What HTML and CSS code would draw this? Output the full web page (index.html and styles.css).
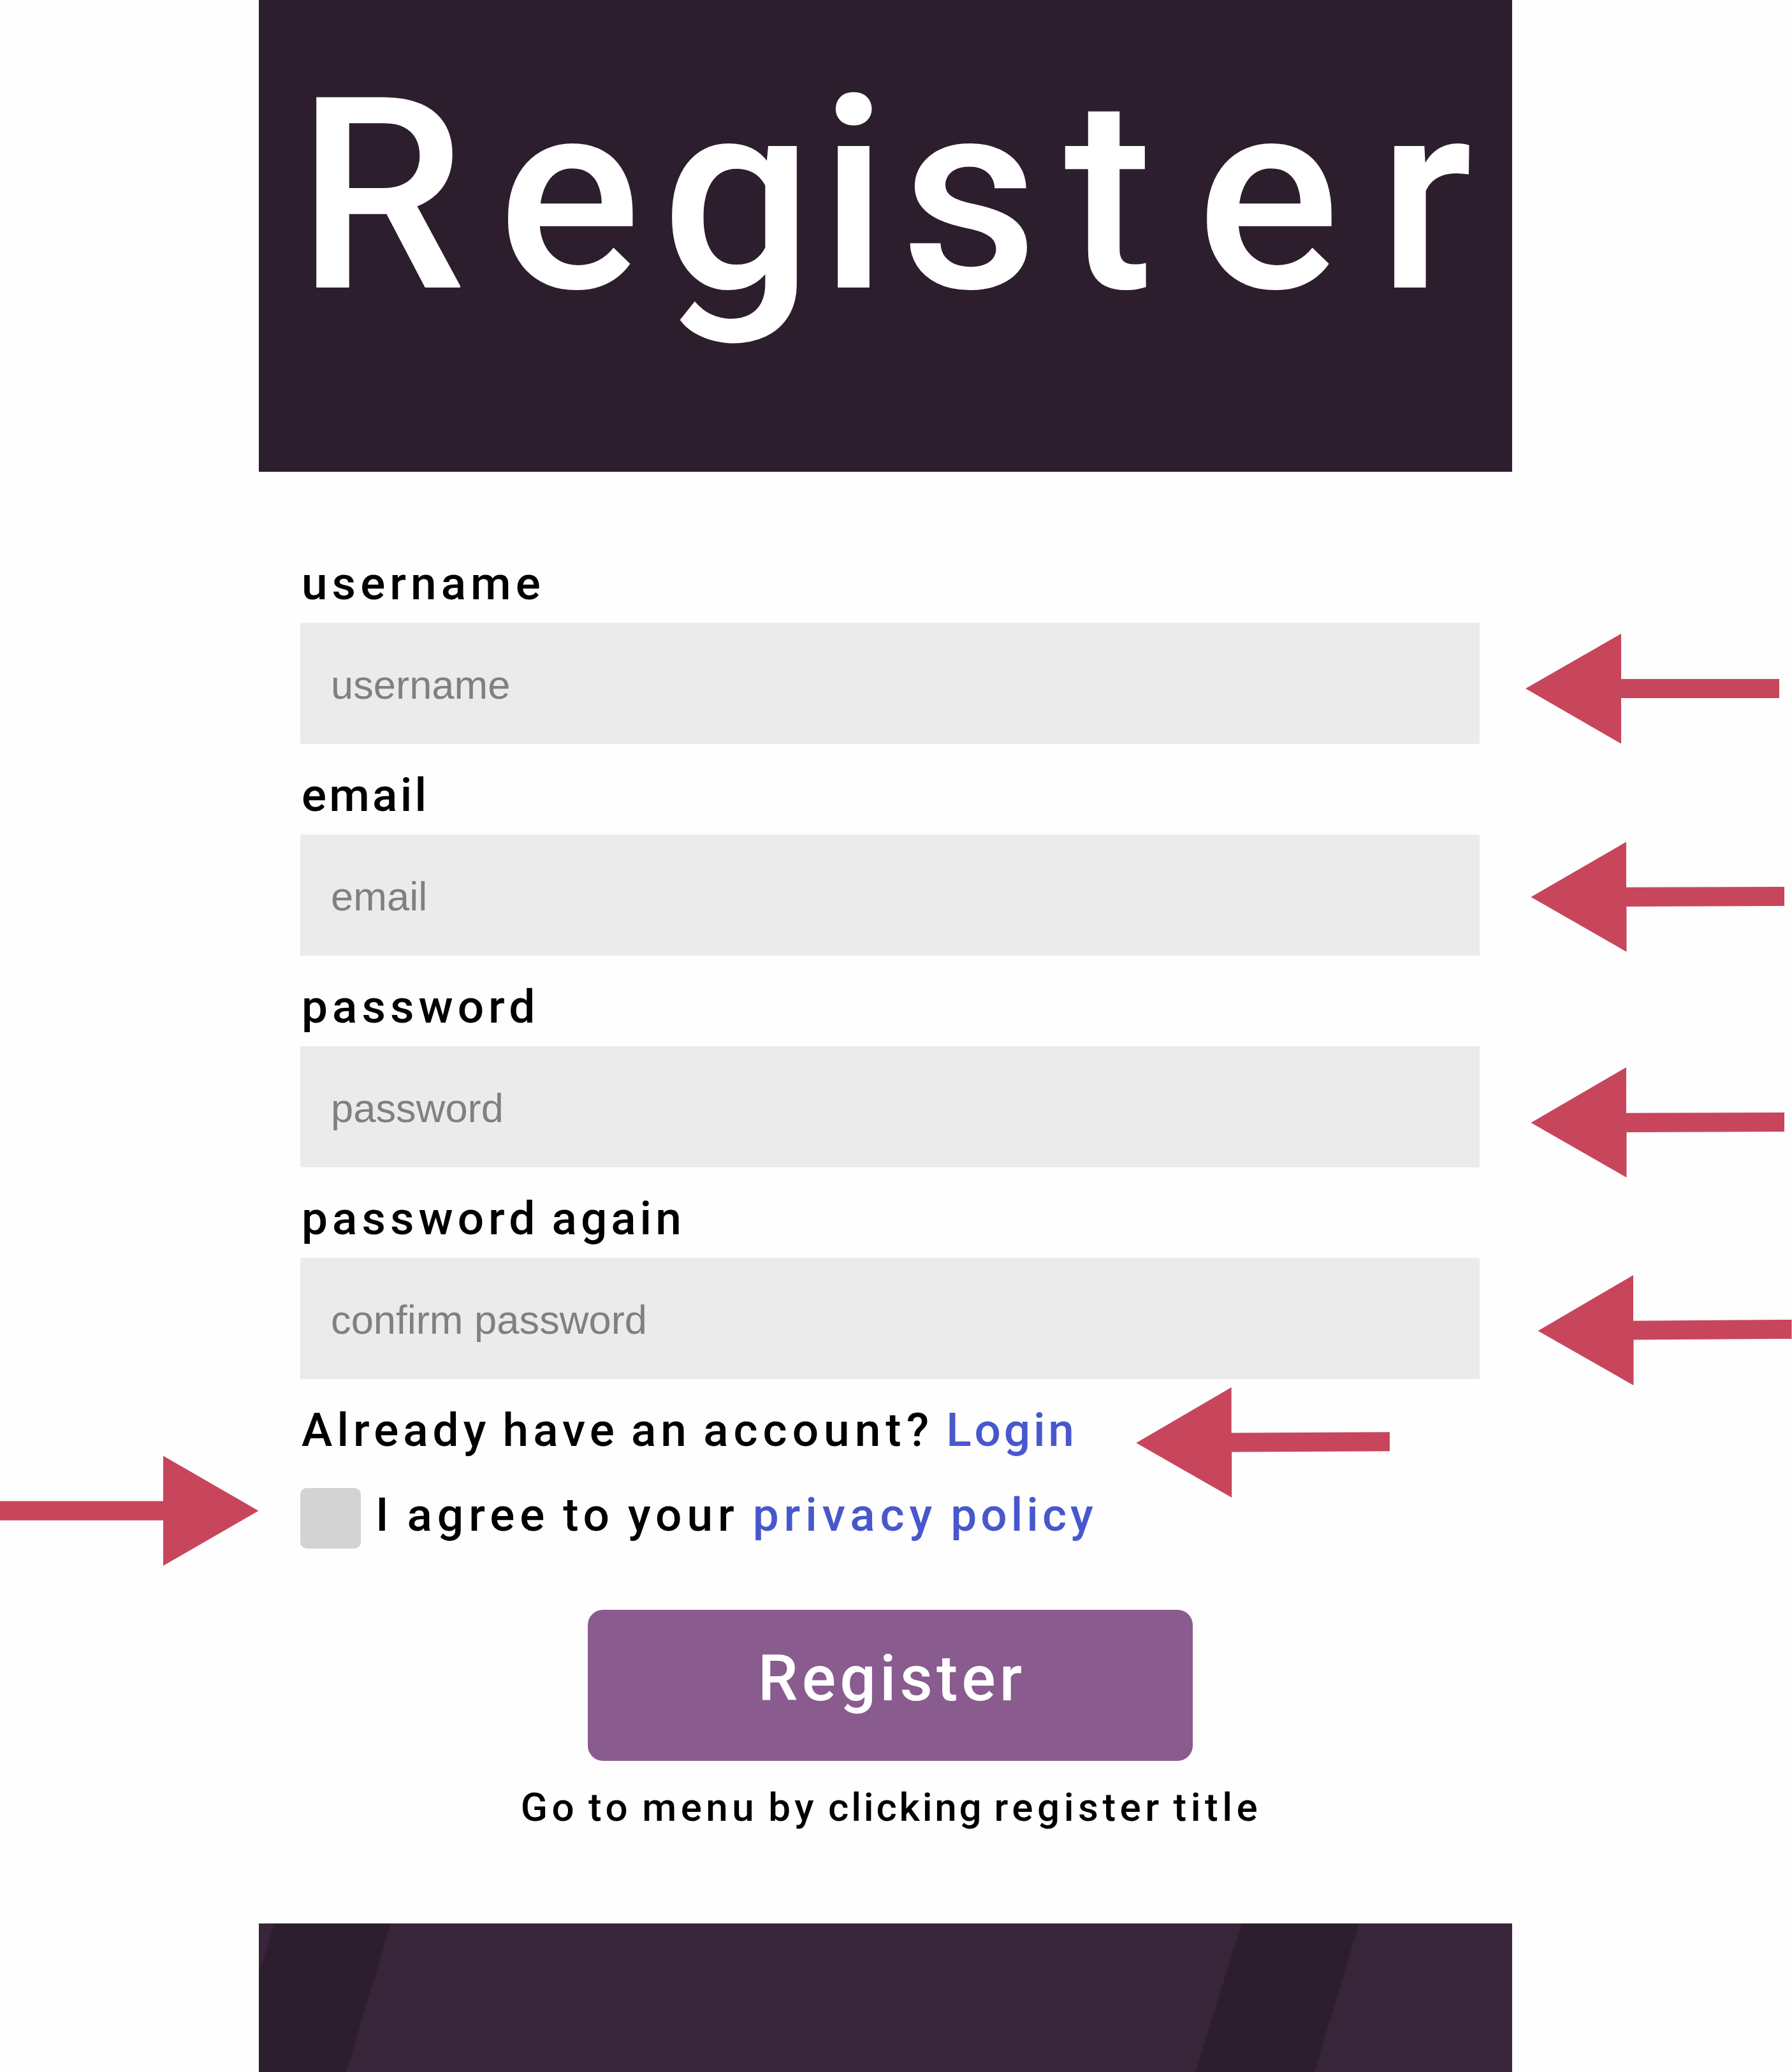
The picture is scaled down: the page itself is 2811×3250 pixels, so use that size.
FILE: index.html
```
<!DOCTYPE html>
<html lang="en">
<head>
<meta charset="utf-8">
<title>Register</title>
<link rel="stylesheet" href="styles.css">
</head>
<body>
<main class="page">
  <header class="banner">
    <h1 class="title"><span class="k-r">R</span><span class="k-e">e</span><span class="k-g">g</span><span class="k-i">i</span><span class="k-s">s</span><span class="k-t">t</span><span class="k-er">e</span>r</h1>
  </header>
  <form class="form">
    <label class="label" for="username">username</label>
    <input class="input" id="username" type="text" placeholder="username">
    <label class="label tight" for="email">email</label>
    <input class="input" id="email" type="text" placeholder="email">
    <label class="label" for="password">password</label>
    <input class="input" id="password" type="password" placeholder="password">
    <label class="label" for="confirm">password <span class="again">again</span></label>
    <input class="input" id="confirm" type="password" placeholder="confirm password">
    <p class="line">Already have an <span class="wide">account?</span> <a class="link tight" href="#">Login</a></p>
    <div class="agree">
      <span class="checkbox"></span>
      <p class="line agree-text">I agree to your <a class="link" href="#">privacy <span class="again">policy</span></a></p>
    </div>
    <button class="button" type="button">Register</button>
    <p class="hint">Go to menu by <span class="tight">clicking</span> register title</p>
  </form>
  <footer class="footer">
    <svg class="stripes" viewBox="0 0 1966 233" preserveAspectRatio="none" aria-hidden="true">
      <path d="M24 0H207L137 233H-46ZM1542 0H1726L1656 233H1469Z"/>
    </svg>
  </footer>
</main>
<svg class="arrows" viewBox="0 0 2811 3250" aria-hidden="true">
  <path d="M2393 1080L2543 994V1065H2791V1095H2543V1166.500Z"/>
  <path d="M2401.500 1407L2551 1320.500V1391.700L2799 1391V1421L2551.500 1422V1493Z"/>
  <path d="M2401.500 1761L2551 1674V1745.700L2799 1745V1775L2551.500 1776V1847Z"/>
  <path d="M2412.500 2087.500L2562 2000V2071.700L2810.500 2070V2100L2562.500 2101.500V2173Z"/>
  <path d="M1782.300 2263.300L1931.700 2176V2247.500L2180 2246.300V2276.300L1932.200 2277.500V2349Z"/>
  <path d="M405.600 2369.700L256 2283.500V2354.500H0V2384.700H256V2456Z"/>
</svg>
</body>
</html>
```
FILE: styles.css
```
* {
  box-sizing: border-box;
}

body {
  margin: 0;
  position: relative;
  background: #fefefe;
  color: #000;
  font-family: Roboto, sans-serif;
  font-weight: 500;
}

.page {
  width: 1966px;
  height: 3250px;
  margin-left: 406px;
  display: flex;
  flex-direction: column;
  overflow: hidden;
}

.banner {
  height: 740px;
  padding: 58px 0 0 60px;
  background: #2d1e2e;
}

.title {
  margin: 0;
  color: #fff;
  font-size: 420px;
  font-weight: 500;
  line-height: 500px;
  white-space: nowrap;
}

/* Kerning of the title, by letter */
.k-r { letter-spacing: 50px; }
.k-e { letter-spacing: 32px; }
.k-g { letter-spacing: 10px; }
.k-i { letter-spacing: 20px; }
.k-s { letter-spacing: 40px; }
.k-t { letter-spacing: 68px; }
.k-er { letter-spacing: 60px; }

.form {
  height: 2277.5px;
  padding: 95.25px 51px 0 65px;
  display: flex;
  flex-direction: column;
}

.label,
.line {
  margin: 0;
  font-size: 73px;
  line-height: 80px;
  letter-spacing: 7px;
  word-spacing: -6px;
  white-space: nowrap;
}

.label {
  height: 142.25px;
  padding: 39.4px 0 0 2px;
}

.tight { letter-spacing: 4.8px; }
.wide { letter-spacing: 8px; }
.again { letter-spacing: 6px; }

.label.tight { letter-spacing: 4.2px; }

.input {
  width: 100%;
  height: 189.75px;
  margin: 0;
  padding: 3px 48px 0;
  border: 0;
  border-radius: 0;
  background: #ebebeb;
  font: 63.3px "Liberation Sans", sans-serif;
}

.input::placeholder {
  color: #808080;
}

.form > .line {
  margin-top: 40px;
  padding-left: 2px;
}

.link {
  color: #4858cc;
  text-decoration: none;
}

.agree {
  margin-top: 51px;
  display: flex;
  gap: 23px;
}

.agree-text {
  padding-top: 2px;
  letter-spacing: 7.9px;
  word-spacing: -5px;
}

.checkbox {
  width: 95px;
  height: 95px;
  border-radius: 10px;
  background: #d3d3d3;
}

.button {
  width: 949px;
  height: 237.5px;
  margin: 95.5px 0 0;
  padding: 0 0 20px 6px;
  align-self: center;
  border: 0;
  border-radius: 24px;
  background: #8a5b8f;
  color: #fff;
  font: 500 100px/120px Roboto, sans-serif;
  letter-spacing: 6px;
}

.hint {
  margin: 33px 0 0;
  padding-left: 4px;
  align-self: center;
  font-size: 62px;
  line-height: 80px;
  letter-spacing: 6.5px;
  word-spacing: -6px;
  white-space: nowrap;
}

.hint .tight { letter-spacing: 3.8px; }

.footer {
  flex: 1;
  background: #38253a;
}

.stripes {
  display: block;
  width: 100%;
  height: 100%;
  fill: #2d1e2e;
}

.arrows {
  position: absolute;
  top: 0;
  left: 0;
  width: 2811px;
  height: 3250px;
  fill: #c8465c;
  pointer-events: none;
}
```
